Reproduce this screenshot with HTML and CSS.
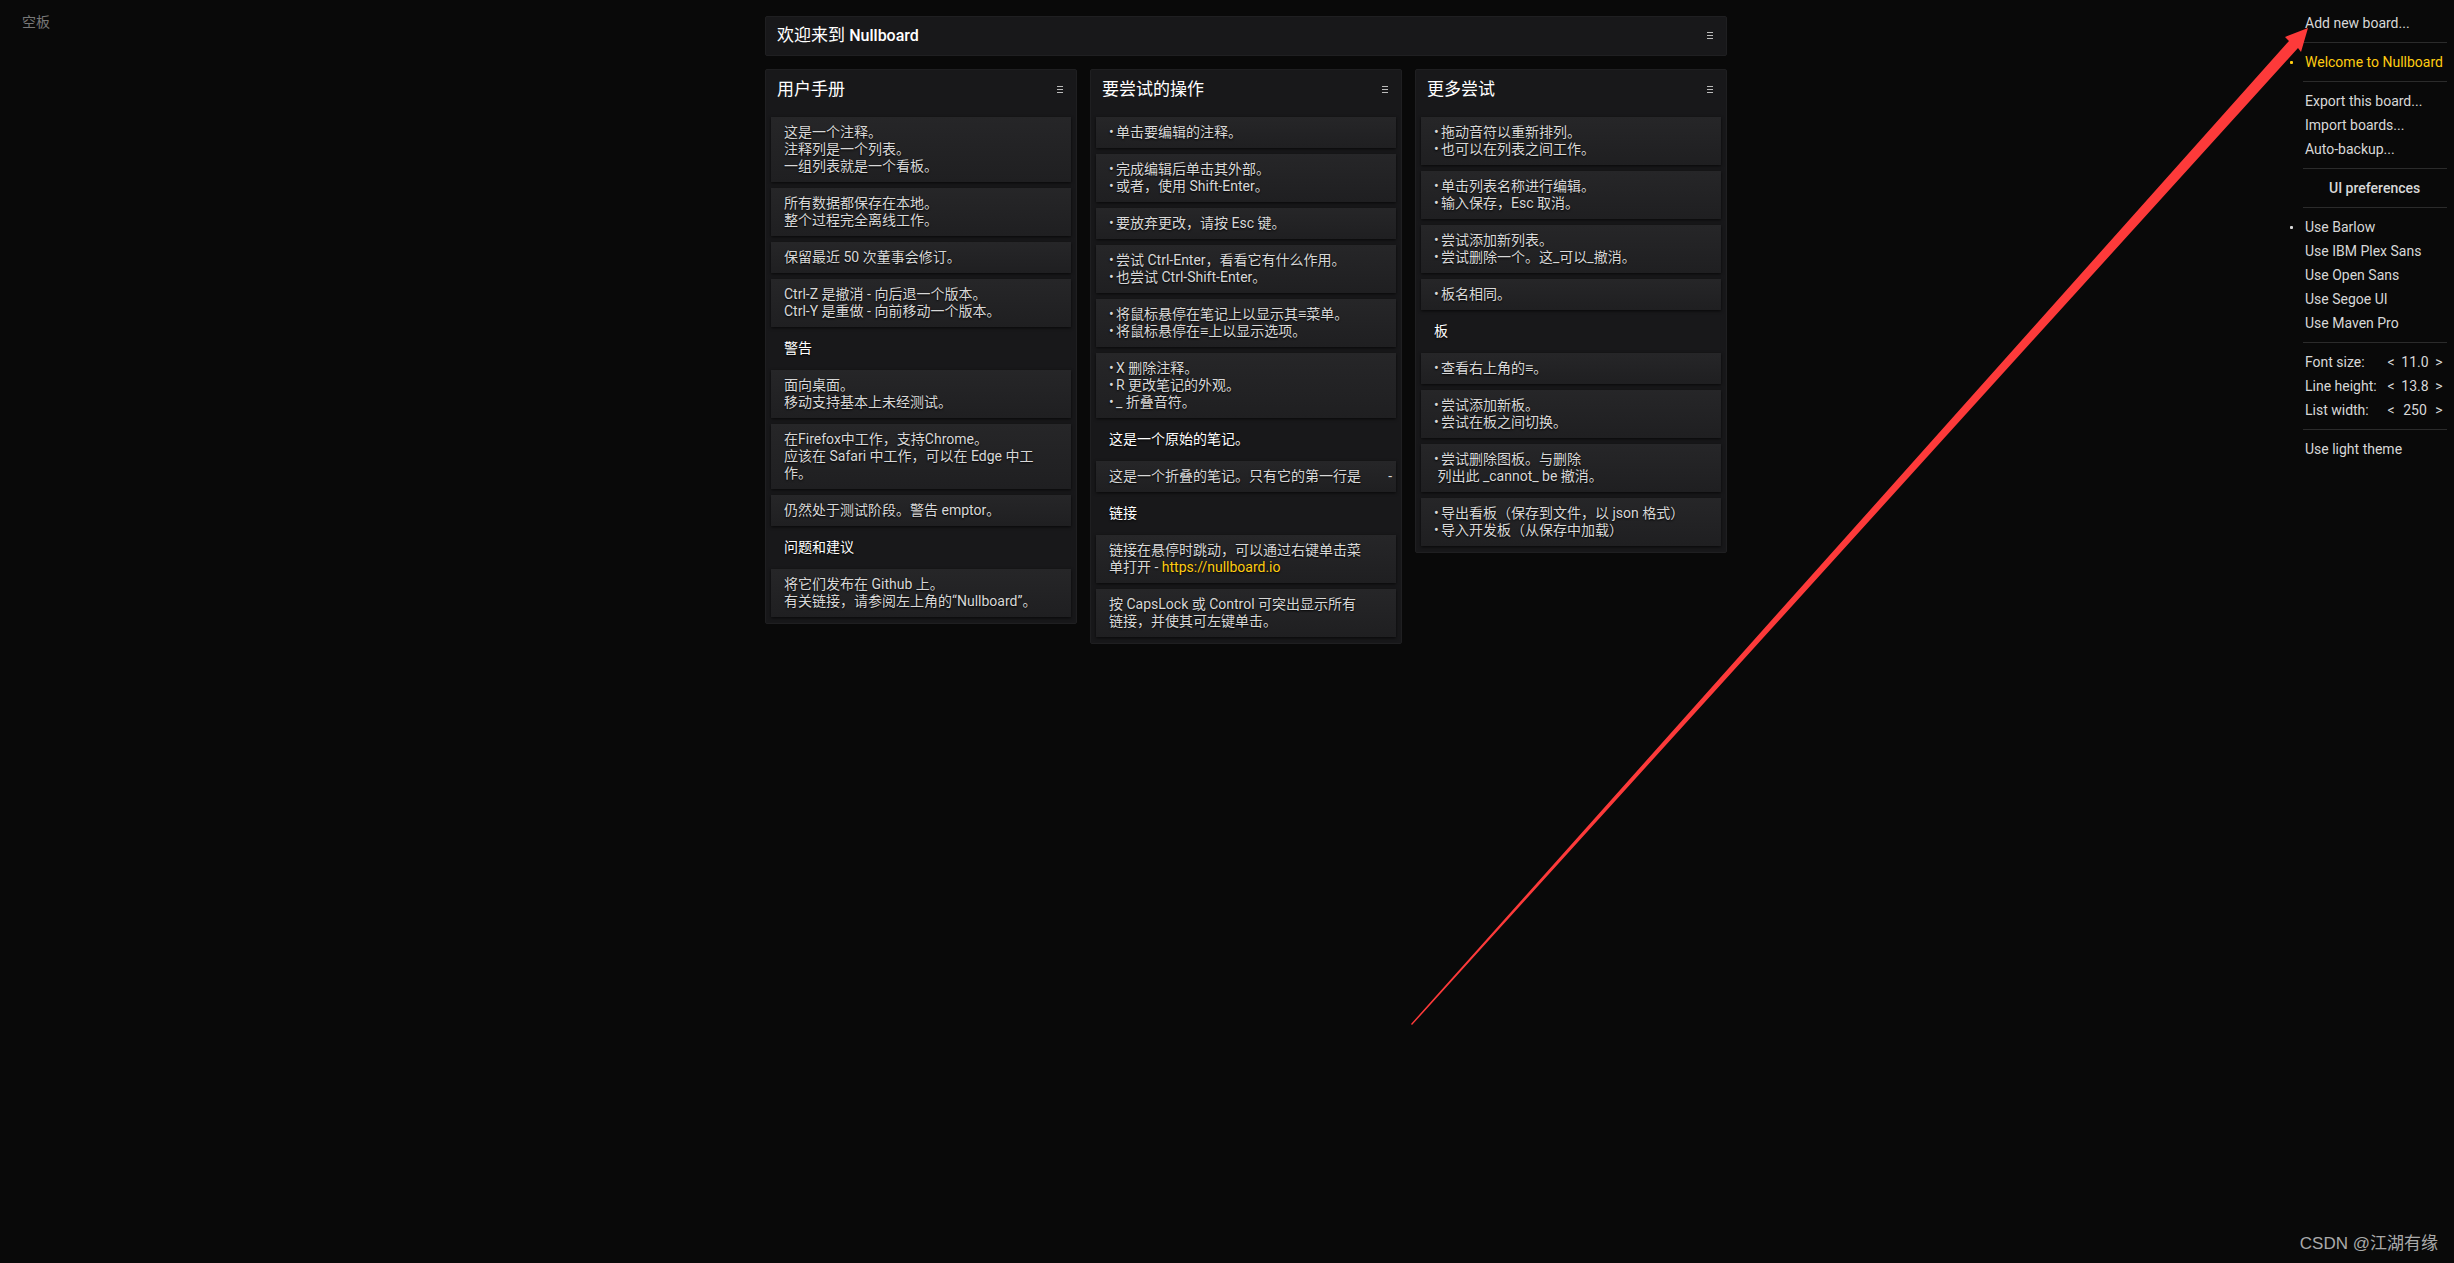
FILE: index.html
```html
<!DOCTYPE html>
<html lang="zh-CN">
<head>
  <meta charset="UTF-8" />
  <meta name="viewport" content="width=device-width, initial-scale=1.0" />
  <title>Nullboard</title>
  <link rel="stylesheet" href="styles.css">
</head>
<body>
  <svg class="icons" aria-hidden="true">
    <symbol id="burger" viewBox="0 0 6 7"><path d="M0 .5h6M0 3.5h6M0 6.5h6" stroke="currentColor"/></symbol>
  </svg>

  <header class="logo"><a href="#">空板</a></header>

  <main class="board">
    <div class="board-head">
      <h1>欢迎来到 <span class="name">Nullboard</span></h1>
      <button class="ops" aria-label="Board menu"><svg><use href="#burger"/></svg></button>
    </div>

    <div class="lists">
      <section class="list">
        <div class="list-head">
          <h2>用户手册</h2>
          <button class="ops" aria-label="List menu"><svg><use href="#burger"/></svg></button>
        </div>
        <div class="notes">
          <div class="note">这是一个注释。<br>注释列是一个列表。<br>一组列表就是一个看板。</div>
          <div class="note">所有数据都保存在本地。<br>整个过程完全离线工作。</div>
          <div class="note">保留最近 50 次董事会修订。</div>
          <div class="note">Ctrl-Z 是撤消 - 向后退一个版本。<br>Ctrl-Y 是重做 - 向前移动一个版本。</div>
          <div class="note raw">警告</div>
          <div class="note">面向桌面。<br>移动支持基本上未经测试。</div>
          <div class="note">在Firefox中工作，支持Chrome。<br>应该在 Safari 中工作，可以在 Edge 中工<br>作。</div>
          <div class="note">仍然处于测试阶段。警告 emptor。</div>
          <div class="note raw">问题和建议</div>
          <div class="note">将它们发布在 Github 上。<br>有关链接，请参阅左上角的<span class="latin">“Nullboard”</span>。</div>
        </div>
      </section>

      <section class="list">
        <div class="list-head">
          <h2>要尝试的操作</h2>
          <button class="ops" aria-label="List menu"><svg><use href="#burger"/></svg></button>
        </div>
        <div class="notes">
          <div class="note"><i class="dot">•</i>单击要编辑的注释。</div>
          <div class="note"><i class="dot">•</i>完成编辑后单击其外部。<br><i class="dot">•</i>或者，使用 Shift-Enter。</div>
          <div class="note"><i class="dot">•</i>要放弃更改，请按 Esc 键。</div>
          <div class="note"><i class="dot">•</i>尝试 Ctrl-Enter，看看它有什么作用。<br><i class="dot">•</i>也尝试 Ctrl-Shift-Enter。</div>
          <div class="note"><i class="dot">•</i>将鼠标悬停在笔记上以显示其<span class="sym">≡</span>菜单。<br><i class="dot">•</i>将鼠标悬停在<span class="sym">≡</span>上以显示选项。</div>
          <div class="note"><i class="dot">•</i>X 删除注释。<br><i class="dot">•</i>R 更改笔记的外观。<br><i class="dot">•</i>_ 折叠音符。</div>
          <div class="note raw">这是一个原始的笔记。</div>
          <div class="note collapsed">这是一个折叠的笔记。只有它的第一行是<button class="expand" aria-label="Expand note">-</button></div>
          <div class="note raw">链接</div>
          <div class="note">链接在悬停时跳动，可以通过右键单击菜<br>单打开 - <a href="https://nullboard.io">https://nullboard.io</a></div>
          <div class="note">按 CapsLock 或 Control 可突出显示所有<br>链接，并使其可左键单击。</div>
        </div>
      </section>

      <section class="list">
        <div class="list-head">
          <h2>更多尝试</h2>
          <button class="ops" aria-label="List menu"><svg><use href="#burger"/></svg></button>
        </div>
        <div class="notes">
          <div class="note"><i class="dot">•</i>拖动音符以重新排列。<br><i class="dot">•</i>也可以在列表之间工作。</div>
          <div class="note"><i class="dot">•</i>单击列表名称进行编辑。<br><i class="dot">•</i>输入保存，Esc 取消。</div>
          <div class="note"><i class="dot">•</i>尝试添加新列表。<br><i class="dot">•</i>尝试删除一个。这_可以_撤消。</div>
          <div class="note"><i class="dot">•</i>板名相同。</div>
          <div class="note raw">板</div>
          <div class="note"><i class="dot">•</i>查看右上角的<span class="sym">≡</span>。</div>
          <div class="note"><i class="dot">•</i>尝试添加新板。<br><i class="dot">•</i>尝试在板之间切换。</div>
          <div class="note"><i class="dot">•</i>尝试删除图板。与删除<br>&nbsp;列出此 _cannot_ be 撤消。</div>
          <div class="note"><i class="dot">•</i>导出看板（保存到文件，以 json 格式）<br><i class="dot">•</i>导入开发板（从保存中加载）</div>
        </div>
      </section>
    </div>
  </main>

  <nav class="menu">
    <a href="#">Add new board...</a>
    <hr>
    <a href="#" class="active current">Welcome to Nullboard</a>
    <hr>
    <a href="#">Export this board...</a>
    <a href="#">Import boards...</a>
    <a href="#">Auto-backup...</a>
    <hr>
    <h3>UI preferences</h3>
    <hr>
    <a href="#" class="active">Use Barlow</a>
    <a href="#">Use IBM Plex Sans</a>
    <a href="#">Use Open Sans</a>
    <a href="#">Use Segoe UI</a>
    <a href="#">Use Maven Pro</a>
    <hr>
    <div class="pref"><span>Font size:</span><button aria-label="Smaller font">&lt;</button><b>11.0</b><button aria-label="Larger font">&gt;</button></div>
    <div class="pref"><span>Line height:</span><button aria-label="Less line height">&lt;</button><b>13.8</b><button aria-label="More line height">&gt;</button></div>
    <div class="pref"><span>List width:</span><button aria-label="Narrower lists">&lt;</button><b>250</b><button aria-label="Wider lists">&gt;</button></div>
    <hr>
    <a href="#">Use light theme</a>
  </nav>

  <svg class="arrow" viewBox="0 0 898 998" aria-hidden="true">
    <polygon points="897,0 874,9 878,13 0,996 1,997 887,20 890,24" fill="#fd3a3a"/>
  </svg>
  <div class="watermark">CSDN @江湖有缘</div>
</body>
</html>
```
FILE: styles.css
```css
:root {
  --bg:#090909;
  --list:#18181a;
  --line:#1f1f21;
  --text:#d8d8d8;
  --bright:#fff;
  --yellow:#fc1;
  --rule:#2b2b2b;
}
*{box-sizing:border-box;margin:0;padding:0}
body{
  min-height:100vh;display:grid;grid-template-columns:minmax(0,1fr) auto minmax(0,1fr);align-items:start;
  position:relative;background:var(--bg);color:var(--text);
  font-family:Roboto,"Noto Sans CJK SC",sans-serif;font-size:14px;line-height:17px}
a{color:inherit;text-decoration:none}
button{background:none;border:none;color:inherit;font:inherit;cursor:pointer}
.icons{position:absolute;width:0;height:0}

.logo{padding:14px 22px;color:#777}

/* board */
.board{margin:16px 0 0 38px}
.board-head,.list{background:var(--list);border:1px solid var(--line);border-radius:2px}
.board-head,.list-head{display:flex;align-items:center;justify-content:space-between;height:40px;padding:0 13px 2px 11px}
.board-head{margin-bottom:13px}
.list-head{margin-bottom:7px}
h1,h2{font-size:17px;line-height:20px;font-weight:400;color:var(--bright)}
h1 .name{font-size:16px;font-weight:500}
.ops{display:flex;color:#bbb}
.ops svg{width:6px;height:7px}

.lists{display:flex;align-items:flex-start;gap:13px}
.list{width:312px;padding-bottom:6px}
.notes{display:flex;flex-direction:column;gap:6px;padding:0 5px}
.note{padding:7px 13px;white-space:nowrap;text-shadow:0 1px 2px #000;
  background:linear-gradient(#262628,#1f1f21);box-shadow:0 1px 3px rgba(0,0,0,.7)}
.note.raw{background:none;box-shadow:none;color:var(--bright)}
.note a{color:var(--yellow)}
.note.collapsed{display:flex;justify-content:space-between;padding-right:4px}
.dot{display:inline-block;width:7px;font-style:normal}
.sym{font-family:"Liberation Sans",sans-serif}
.latin{font-family:Roboto,sans-serif}

/* right menu */
.menu{justify-self:end;width:144px;margin:11px 7px 0 0}
.menu a,.menu h3,.pref{display:block;height:24px;line-height:24px;padding-left:2px;white-space:nowrap}
.menu h3{font-size:14px;font-weight:500;padding-left:26px}
.menu hr{border:none;height:1px;margin:7px 0;background:var(--rule)}
.menu .active{position:relative}
.menu .active::before{content:"";position:absolute;left:-13px;top:11px;width:3px;height:3px;border-radius:1px;background:currentColor}
.menu .current{color:var(--yellow)}
.menu .pref{display:grid;grid-template-columns:1fr 10px 38px 10px;padding-right:3px;text-align:center}
.pref span{text-align:left}
.pref b{font-weight:400}

/* overlay */
.arrow{position:absolute;right:145px;top:28px;width:898px;height:998px;pointer-events:none}
.watermark{position:absolute;right:16px;bottom:8px;font:17px/22px "Liberation Sans","Noto Sans CJK SC",sans-serif;color:#aaa}
```
